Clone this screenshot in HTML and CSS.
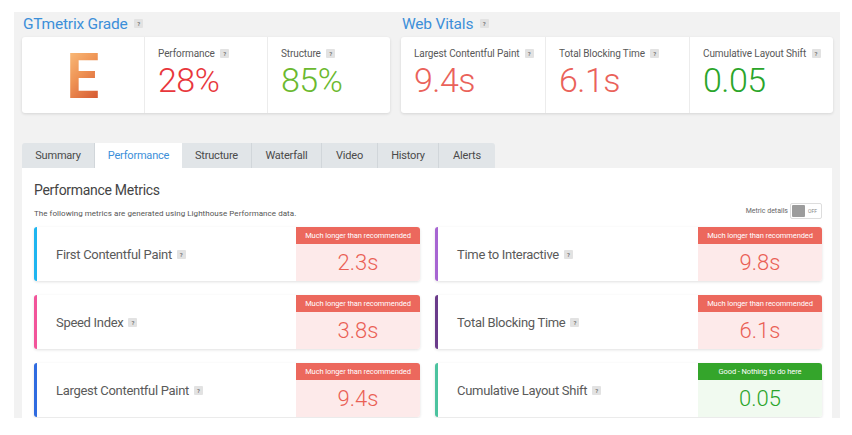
FILE: index.html
```html
<!DOCTYPE html>
<html>
<head>
<meta charset="utf-8">
<link rel="stylesheet" href="styles.css">
</head>
<body>
<div class="wrap">
  <div class="top">
    <section class="grade">
      <h2 class="heading">GTmetrix Grade <span class="help">?</span></h2>
      <div class="card">
        <div class="cell cell-e"><span class="letter">E</span></div>
        <div class="cell"><div class="lbl">Performance <span class="help">?</span></div><div class="val red">28%</div></div>
        <div class="cell"><div class="lbl">Structure <span class="help">?</span></div><div class="val green">85%</div></div>
      </div>
    </section>
    <section class="vitals">
      <h2 class="heading">Web Vitals <span class="help">?</span></h2>
      <div class="card">
        <div class="cell"><div class="lbl">Largest Contentful Paint <span class="help">?</span></div><div class="val salmon">9.4s</div></div>
        <div class="cell"><div class="lbl">Total Blocking Time <span class="help">?</span></div><div class="val salmon">6.1s</div></div>
        <div class="cell"><div class="lbl">Cumulative Layout Shift <span class="help">?</span></div><div class="val dgreen">0.05</div></div>
      </div>
    </section>
  </div>

  <nav class="tabs">
    <span class="tab t-summary">Summary</span>
    <span class="tab t-perf active">Performance</span>
    <span class="tab t-struct">Structure</span>
    <span class="tab t-water">Waterfall</span>
    <span class="tab t-video">Video</span>
    <span class="tab t-hist">History</span>
    <span class="tab t-alert">Alerts</span>
  </nav>

  <div class="panel">
    <h3 class="ptitle">Performance Metrics</h3>
    <div class="subrow">
      <p class="psub">The following metrics are generated using Lighthouse Performance data.</p>
      <div class="toggle-wrap">
        <span class="tlabel">Metric details</span>
        <span class="toggle"><span class="knob"></span><span class="off">OFF</span></span>
      </div>
    </div>
    <div class="grid">
      <div class="metric b-fcp"><div class="mname">First Contentful Paint <span class="help">?</span></div><div class="badge bad"><div class="bhead">Much longer than recommended</div><div class="bval">2.3s</div></div></div>
      <div class="metric b-tti"><div class="mname">Time to Interactive <span class="help">?</span></div><div class="badge bad"><div class="bhead">Much longer than recommended</div><div class="bval">9.8s</div></div></div>
      <div class="metric b-si"><div class="mname">Speed Index <span class="help">?</span></div><div class="badge bad"><div class="bhead">Much longer than recommended</div><div class="bval">3.8s</div></div></div>
      <div class="metric b-tbt"><div class="mname">Total Blocking Time <span class="help">?</span></div><div class="badge bad"><div class="bhead">Much longer than recommended</div><div class="bval">6.1s</div></div></div>
      <div class="metric b-lcp"><div class="mname">Largest Contentful Paint <span class="help">?</span></div><div class="badge bad"><div class="bhead">Much longer than recommended</div><div class="bval">9.4s</div></div></div>
      <div class="metric b-cls"><div class="mname">Cumulative Layout Shift <span class="help">?</span></div><div class="badge good"><div class="bhead">Good - Nothing to do here</div><div class="bval">0.05</div></div></div>
    </div>
  </div>
</div>
</body>
</html>
```

FILE: styles.css
```css
* { box-sizing: border-box; }
html, body { margin: 0; padding: 0; background: #ffffff; }
body {
  font-family: Roboto, "Open Sans", "DejaVu Sans", sans-serif;
  color: #444;
  width: 852px;
  height: 435px;
  overflow: hidden;
}
.wrap {
  margin: 12px 12px 0 14px;
  width: 826px;
  height: 406px;
  background: #f2f2f2;
  padding: 0 7px 0 8px;
  overflow: hidden;
}
.top {
  display: flex;
  gap: 11px;
}
.grade { width: 368px; }
.vitals { width: 432px; }
.heading {
  margin: 0;
  height: 25px;
  padding-top: 2px;
  font-size: 15.5px;
  font-weight: 400;
  color: #3c8fd9;
  letter-spacing: -0.2px;
  line-height: 20px;
  padding-left: 1px;
}
.heading .help { vertical-align: 3px; }
.help {
  display: inline-block;
  width: 9px;
  height: 9px;
  background: #e2e2e2;
  color: #777;
  font-size: 6px;
  font-weight: 700;
  line-height: 9px;
  text-align: center;
  border-radius: 1px;
  margin-left: 3px;
  vertical-align: 1px;
  letter-spacing: 0;
}
.card {
  display: flex;
  height: 76px;
  background: #fff;
  border-radius: 3px;
  box-shadow: 0 1px 3px rgba(0,0,0,0.12);
}
.cell {
  flex: 1;
  padding: 11px 0 0 13px;
  border-left: 1px solid #ececec;
}
.cell:first-child { border-left: none; }
.grade .cell { flex: 0 0 123px; }
.grade .cell-e { flex: 0 0 122px; }
.vitals .cell { flex: 0 0 144px; }
.vitals .cell:last-child { flex: 1; }
.cell-e {
  display: flex;
  align-items: center;
  justify-content: center;
  padding: 0;
}
.letter {
  font-size: 63px;
  font-weight: 700;
  line-height: 1;
  background: linear-gradient(135deg, #fcc684 0%, #ef9455 45%, #cf4a2a 100%);
  -webkit-background-clip: text;
  background-clip: text;
  color: transparent;
  margin-top: 2px;
  transform: scaleX(0.92);
}
.lbl {
  font-size: 10px;
  color: #585858;
  line-height: 12px;
  letter-spacing: -0.1px;
}
.val {
  font-size: 34px;
  font-weight: 300;
  line-height: 36px;
  margin-top: 2px;
  letter-spacing: -0.5px;
}
.red { color: #e8373c; }
.green { color: #6bb92f; }
.salmon { color: #ea625a; }
.dgreen { color: #2aa52a; }

.tabs {
  display: flex;
  margin-top: 30px;
  height: 25px;
}
.tab {
  display: flex;
  align-items: center;
  justify-content: center;
  background: #e1e5e8;
  border-right: 1px solid #d1d6da;
  font-size: 11px;
  color: #4a4a4a;
  letter-spacing: -0.2px;
}
.tab:first-child { border-radius: 3px 0 0 0; }
.tab:last-child { border-radius: 0 3px 0 0; border-right: none; }
.tab.active { background: #fff; color: #3c8fd9; border-right: none; }
.t-summary { width: 73px; }
.t-perf { width: 87px; }
.t-struct { width: 70px; }
.t-water { width: 70px; }
.t-video { width: 56px; }
.t-hist { width: 61px; }
.t-alert { width: 56px; }

.panel {
  background: #fff;
  width: 810px;
  height: 260px;
  padding: 12px 10px 0 12px;
}
.ptitle {
  margin: 0;
  font-size: 14px;
  font-weight: 400;
  color: #444;
  line-height: 20px;
  letter-spacing: -0.3px;
}
.subrow {
  display: flex;
  justify-content: space-between;
  align-items: center;
  height: 20px;
  margin-top: 0;
}
.psub {
  margin: 0;
  font-size: 8px;
  color: #555;
  padding-top: 6px;
  letter-spacing: 0.05px;
}
.toggle-wrap {
  display: flex;
  align-items: center;
  gap: 2px;
  padding-top: 1px;
}
.tlabel { font-size: 7px; color: #666; }
.toggle {
  display: flex;
  align-items: center;
  width: 32px;
  height: 16px;
  border: 1px solid #ddd;
  border-radius: 2px;
  padding: 1px;
  background: #fff;
}
.knob {
  width: 13px;
  height: 12px;
  background: #9c9c9c;
  border-radius: 1px;
}
.off { font-size: 5px; color: #888; margin-left: 3px; }

.grid {
  display: grid;
  grid-template-columns: 386px 387px;
  column-gap: 15px;
  row-gap: 14px;
  margin-top: 7px;
}
.metric {
  display: flex;
  height: 54px;
  background: #fff;
  border-radius: 3px;
  border-left: 3px solid #1eb5f0;
  box-shadow: 0 1px 3px rgba(0,0,0,0.12);
  overflow: hidden;
}
.mname {
  flex: 1;
  display: flex;
  align-items: center;
  padding-left: 19px;
  font-size: 13px;
  color: #5a5a5a;
  letter-spacing: -0.3px;
}
.mname .help { margin-left: 5px; vertical-align: 0; }
.badge {
  width: 124px;
  display: flex;
  flex-direction: column;
}
.bhead {
  height: 17px;
  font-size: 7.5px;
  color: #fff;
  display: flex;
  align-items: center;
  justify-content: center;
  letter-spacing: -0.1px;
}
.bval {
  flex: 1;
  display: flex;
  align-items: center;
  justify-content: center;
  font-size: 22px;
  font-weight: 300;
  padding-bottom: 1px;
}
.bad .bhead { background: #ec685d; }
.bad .bval { background: #fdeaea; color: #ea5f55; }
.good .bhead { background: #34a52b; }
.good .bval { background: #f1faf0; color: #2aa52a; }

.b-fcp { border-left-color: #1eb5f0; }
.b-si { border-left-color: #f2549a; }
.b-lcp { border-left-color: #2f6be0; }
.b-tti { border-left-color: #a765d2; }
.b-tbt { border-left-color: #6a3b8a; }
.b-cls { border-left-color: #4cc39f; }
```
